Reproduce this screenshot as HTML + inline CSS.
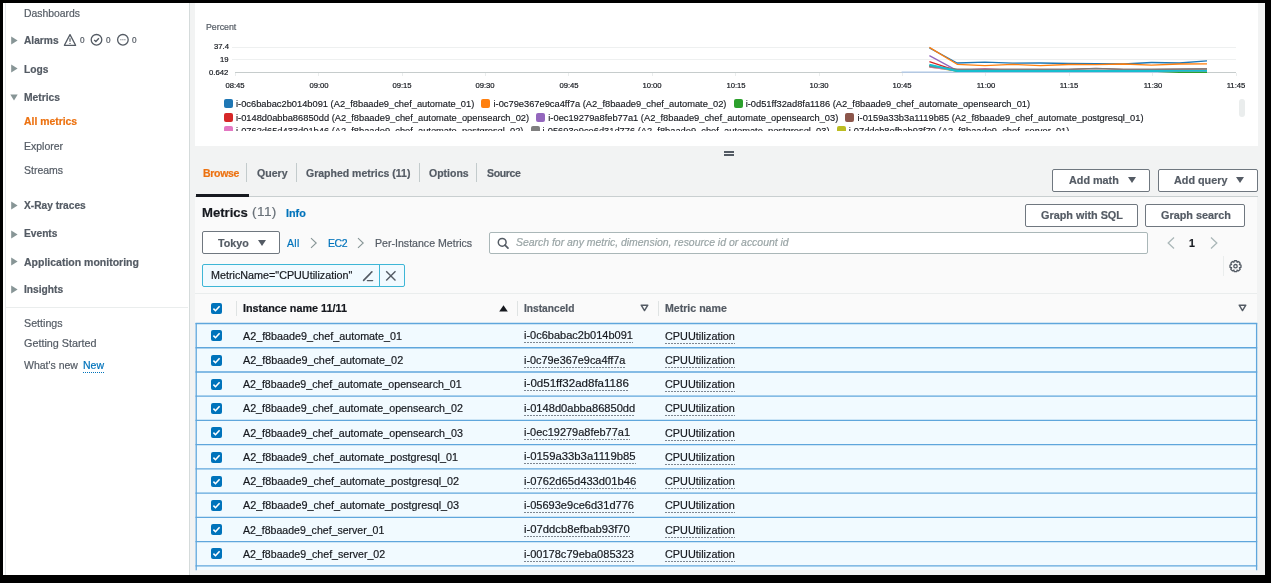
<!DOCTYPE html><html><head><meta charset="utf-8"><style>
html,body{margin:0;padding:0;}
body{width:1271px;height:583px;background:#000;position:relative;overflow:hidden;font-family:"Liberation Sans",sans-serif;}
.t{position:absolute;white-space:nowrap;will-change:transform;-webkit-text-stroke:0.2px currentColor;}
.leg{will-change:transform;-webkit-text-stroke:0.15px currentColor;}
.r{position:absolute;}
.leg{position:absolute;left:0;white-space:nowrap;font-size:9.3px;line-height:13.6px;color:#16191f;}
.li{display:inline-block;margin-right:7.2px;}
.sq{display:inline-block;width:9px;height:9px;border-radius:2px;margin-right:3px;vertical-align:-1px;}
.btn{position:absolute;background:#fff;border:1px solid #6f777f;border-radius:2px;}
.inp{position:absolute;background:#fff;border:1px solid #aab7b8;border-radius:2px;}
.tok{position:absolute;background:#f1faff;border:1px solid #3db6d6;border-radius:2px;}
.dot{background-image:linear-gradient(to right,#7d8690 2px,transparent 2px);background-size:3px 1px;background-repeat:repeat-x;background-position:0 100%;padding-bottom:2px;}
</style></head><body><div class="r" style="left:3.00px;top:3.00px;width:1262.00px;height:572.30px;background:#f2f3f3;"></div>
<div class="r" style="left:3.00px;top:3.00px;width:186.00px;height:572.30px;background:#fff;"></div>
<div class="r" style="left:5.00px;top:3.00px;width:1.00px;height:572.30px;background:#e6e9ec;"></div>
<div class="r" style="left:189.00px;top:3.00px;width:1.00px;height:572.30px;background:#d5dbdb;"></div>
<div class="t" style="left:23.70px;top:9.40px;font-size:10.4px;line-height:10.4px;color:#545b64;">Dashboards</div>
<svg class="r" style="left:11px;top:35.8px" width="7" height="9" viewBox="0 0 7 9"><path d="M0.2 0.4 L6.6 4.5 L0.2 8.6Z" fill="#879596"/></svg>
<div class="t" style="left:24.00px;top:35.57px;font-size:10.2px;line-height:10.2px;color:#545b64;font-weight:700;">Alarms</div>
<svg class="r" style="left:63px;top:33px" width="14" height="14" viewBox="0 0 14 14">
<path d="M7 1.6 L12.6 12.3 L1.4 12.3 Z" fill="none" stroke="#545b64" stroke-width="1.3" stroke-linejoin="round"/>
<path d="M7 5.2 V8.8" stroke="#545b64" stroke-width="1.2"/><path d="M7 10 V11" stroke="#545b64" stroke-width="1.2"/></svg>
<div class="t" style="left:79.80px;top:37.16px;font-size:8.2px;line-height:8.2px;color:#545b64;">0</div>
<svg class="r" style="left:90px;top:33px" width="14" height="14" viewBox="0 0 14 14">
<circle cx="6.5" cy="6.8" r="5.3" fill="none" stroke="#545b64" stroke-width="1.3"/>
<path d="M4.2 6.9 L5.9 8.5 L8.9 5.3" fill="none" stroke="#545b64" stroke-width="1.4"/></svg>
<div class="t" style="left:105.80px;top:37.16px;font-size:8.2px;line-height:8.2px;color:#545b64;">0</div>
<svg class="r" style="left:116px;top:33px" width="14" height="14" viewBox="0 0 14 14">
<circle cx="6.9" cy="6.8" r="5.3" fill="none" stroke="#545b64" stroke-width="1.3"/>
<path d="M4.4 6.8 H5.4 M6.4 6.8 H7.4 M8.4 6.8 H9.4" fill="none" stroke="#545b64" stroke-width="1.1"/></svg>
<div class="t" style="left:132.00px;top:37.16px;font-size:8.2px;line-height:8.2px;color:#545b64;">0</div>
<svg class="r" style="left:11px;top:64.1px" width="7" height="9" viewBox="0 0 7 9"><path d="M0.2 0.4 L6.6 4.5 L0.2 8.6Z" fill="#879596"/></svg>
<div class="t" style="left:24.00px;top:64.87px;font-size:10.2px;line-height:10.2px;color:#545b64;font-weight:700;">Logs</div>
<svg class="r" style="left:10px;top:93.8px" width="8" height="7" viewBox="0 0 8 7"><path d="M0.3 0.5 L7.7 0.5 L4 6.5Z" fill="#879596"/></svg>
<div class="t" style="left:24.00px;top:92.88px;font-size:10.3px;line-height:10.3px;color:#545b64;font-weight:700;">Metrics</div>
<div class="t" style="left:23.70px;top:116.90px;font-size:10.4px;line-height:10.4px;color:#ec7211;font-weight:700;">All metrics</div>
<div class="t" style="left:23.70px;top:140.81px;font-size:10.5px;line-height:10.5px;color:#545b64;">Explorer</div>
<div class="t" style="left:23.70px;top:164.91px;font-size:10.5px;line-height:10.5px;color:#545b64;">Streams</div>
<svg class="r" style="left:11px;top:201.4px" width="7" height="9" viewBox="0 0 7 9"><path d="M0.2 0.4 L6.6 4.5 L0.2 8.6Z" fill="#879596"/></svg>
<div class="t" style="left:24.00px;top:201.17px;font-size:10.2px;line-height:10.2px;color:#545b64;font-weight:700;">X-Ray traces</div>
<svg class="r" style="left:11px;top:229.5px" width="7" height="9" viewBox="0 0 7 9"><path d="M0.2 0.4 L6.6 4.5 L0.2 8.6Z" fill="#879596"/></svg>
<div class="t" style="left:24.00px;top:229.27px;font-size:10.2px;line-height:10.2px;color:#545b64;font-weight:700;">Events</div>
<svg class="r" style="left:11px;top:257.3px" width="7" height="9" viewBox="0 0 7 9"><path d="M0.2 0.4 L6.6 4.5 L0.2 8.6Z" fill="#879596"/></svg>
<div class="t" style="left:24.00px;top:256.71px;font-size:10.5px;line-height:10.5px;color:#545b64;font-weight:700;">Application monitoring</div>
<svg class="r" style="left:11px;top:285.3px" width="7" height="9" viewBox="0 0 7 9"><path d="M0.2 0.4 L6.6 4.5 L0.2 8.6Z" fill="#879596"/></svg>
<div class="t" style="left:24.00px;top:285.37px;font-size:10.2px;line-height:10.2px;color:#545b64;font-weight:700;">Insights</div>
<div class="r" style="left:6.00px;top:306.60px;width:182.00px;height:1.00px;background:#eaeded;"></div>
<div class="t" style="left:23.70px;top:317.74px;font-size:10.7px;line-height:10.7px;color:#545b64;">Settings</div>
<div class="t" style="left:23.70px;top:337.56px;font-size:10.8px;line-height:10.8px;color:#545b64;">Getting Started</div>
<div class="t" style="left:23.70px;top:359.61px;font-size:10.5px;line-height:10.5px;color:#545b64;">What's new</div>
<div class="t" style="left:82.70px;top:359.61px;font-size:10.5px;line-height:10.5px;color:#0073bb;border-bottom:1px dotted #0073bb;padding-bottom:1px;">New</div>
<div class="r" style="left:195.00px;top:3.00px;width:1063.00px;height:143.00px;background:#fff;"></div>
<div class="t" style="left:206.40px;top:23.05px;font-size:8.8px;line-height:8.8px;color:#545b64;">Percent</div>
<div class="t" style="right:1042.30px;top:43.28px;font-size:7.7px;line-height:7.7px;color:#16191f;">37.4</div>
<div class="t" style="right:1042.30px;top:55.88px;font-size:7.7px;line-height:7.7px;color:#16191f;">19</div>
<div class="t" style="right:1042.30px;top:68.68px;font-size:7.7px;line-height:7.7px;color:#16191f;">0.642</div>
<div class="r" style="left:231.50px;top:46.60px;width:1004.00px;height:1.00px;background:#eef0f0;"></div>
<div class="r" style="left:231.50px;top:58.90px;width:1004.00px;height:1.00px;background:#eef0f0;"></div>
<div class="r" style="left:235.00px;top:71.80px;width:1000.50px;height:1.10px;background:#c6cccc;"></div>
<div class="r" style="left:234.70px;top:72.50px;width:1.00px;height:3.00px;background:#eaeded;"></div>
<div class="t" style="left:205.20px;width:60px;text-align:center;top:82.08px;font-size:7.7px;line-height:7.7px;color:#16191f;">08:45</div>
<div class="r" style="left:318.10px;top:72.50px;width:1.00px;height:3.00px;background:#eaeded;"></div>
<div class="t" style="left:288.60px;width:60px;text-align:center;top:82.08px;font-size:7.7px;line-height:7.7px;color:#16191f;">09:00</div>
<div class="r" style="left:401.50px;top:72.50px;width:1.00px;height:3.00px;background:#eaeded;"></div>
<div class="t" style="left:372.00px;width:60px;text-align:center;top:82.08px;font-size:7.7px;line-height:7.7px;color:#16191f;">09:15</div>
<div class="r" style="left:484.90px;top:72.50px;width:1.00px;height:3.00px;background:#eaeded;"></div>
<div class="t" style="left:455.40px;width:60px;text-align:center;top:82.08px;font-size:7.7px;line-height:7.7px;color:#16191f;">09:30</div>
<div class="r" style="left:568.30px;top:72.50px;width:1.00px;height:3.00px;background:#eaeded;"></div>
<div class="t" style="left:538.80px;width:60px;text-align:center;top:82.08px;font-size:7.7px;line-height:7.7px;color:#16191f;">09:45</div>
<div class="r" style="left:651.70px;top:72.50px;width:1.00px;height:3.00px;background:#eaeded;"></div>
<div class="t" style="left:622.20px;width:60px;text-align:center;top:82.08px;font-size:7.7px;line-height:7.7px;color:#16191f;">10:00</div>
<div class="r" style="left:735.10px;top:72.50px;width:1.00px;height:3.00px;background:#eaeded;"></div>
<div class="t" style="left:705.60px;width:60px;text-align:center;top:82.08px;font-size:7.7px;line-height:7.7px;color:#16191f;">10:15</div>
<div class="r" style="left:818.50px;top:72.50px;width:1.00px;height:3.00px;background:#eaeded;"></div>
<div class="t" style="left:789.00px;width:60px;text-align:center;top:82.08px;font-size:7.7px;line-height:7.7px;color:#16191f;">10:30</div>
<div class="r" style="left:901.90px;top:72.50px;width:1.00px;height:3.00px;background:#eaeded;"></div>
<div class="t" style="left:872.40px;width:60px;text-align:center;top:82.08px;font-size:7.7px;line-height:7.7px;color:#16191f;">10:45</div>
<div class="r" style="left:985.30px;top:72.50px;width:1.00px;height:3.00px;background:#eaeded;"></div>
<div class="t" style="left:955.80px;width:60px;text-align:center;top:82.08px;font-size:7.7px;line-height:7.7px;color:#16191f;">11:00</div>
<div class="r" style="left:1068.70px;top:72.50px;width:1.00px;height:3.00px;background:#eaeded;"></div>
<div class="t" style="left:1039.20px;width:60px;text-align:center;top:82.08px;font-size:7.7px;line-height:7.7px;color:#16191f;">11:15</div>
<div class="r" style="left:1152.10px;top:72.50px;width:1.00px;height:3.00px;background:#eaeded;"></div>
<div class="t" style="left:1122.60px;width:60px;text-align:center;top:82.08px;font-size:7.7px;line-height:7.7px;color:#16191f;">11:30</div>
<div class="r" style="left:1235.50px;top:72.50px;width:1.00px;height:3.00px;background:#eaeded;"></div>
<div class="t" style="left:1206.00px;width:60px;text-align:center;top:82.08px;font-size:7.7px;line-height:7.7px;color:#16191f;">11:45</div>
<svg class="r" style="left:0;top:0" width="1271" height="146" viewBox="0 0 1271 146"><path d="M901.6 72.2 H1207.0" stroke="#aec7e8" stroke-width="1.3" fill="none"/><path d="M929.4 55.6 L957.1 70.6 L984.9 70.9 L1012.7 70.9 L1040.4 70.9 L1068.2 70.9 L1096.0 70.9 L1123.7 70.9 L1151.5 70.9 L1179.3 70.9 L1207.0 70.9" stroke="#9467bd" stroke-width="1.3" fill="none" stroke-linejoin="round"/><path d="M929.4 61.7 L957.1 70.8 L984.9 70.9 L1012.7 70.9 L1040.4 70.9 L1068.2 70.9 L1096.0 70.9 L1123.7 70.9 L1151.5 70.9 L1179.3 70.9 L1207.0 70.9" stroke="#d62728" stroke-width="1.3" fill="none" stroke-linejoin="round"/><path d="M929.4 66.8 L957.1 71.2 L984.9 71.2 L1012.7 71.2 L1040.4 71.2 L1068.2 71.2 L1096.0 71.2 L1123.7 71.2 L1151.5 71.2 L1179.3 71.2 L1207.0 71.2" stroke="#bcbd22" stroke-width="1.3" fill="none" stroke-linejoin="round"/><path d="M929.4 65.5 L957.1 71.2 L984.9 71.2 L1012.7 71.2 L1040.4 71.2 L1068.2 71.2 L1096.0 71.2 L1123.7 71.2 L1151.5 71.2 L1179.3 72.3 L1207.0 72.3" stroke="#2ca02c" stroke-width="1.3" fill="none" stroke-linejoin="round"/><path d="M929.4 67.2 L957.1 70.6 L984.9 68.6 L1012.7 70.4 L1040.4 70.9 L1068.2 70.9 L1096.0 70.9 L1123.7 70.9 L1151.5 70.9 L1179.3 70.9 L1207.0 70.9" stroke="#e377c2" stroke-width="1.3" fill="none" stroke-linejoin="round"/><path d="M929.4 66.0 L957.1 69.3 L984.9 69.3 L1012.7 69.3 L1040.4 69.3 L1068.2 69.3 L1096.0 68.4 L1123.7 69.3 L1151.5 69.3 L1179.3 69.1 L1207.0 68.9" stroke="#8c564b" stroke-width="1.3" fill="none" stroke-linejoin="round"/><path d="M929.4 66.5 L957.1 69.4 L984.9 69.4 L1012.7 69.4 L1040.4 69.4 L1068.2 69.4 L1096.0 68.6 L1123.7 69.4 L1151.5 69.4 L1179.3 69.2 L1207.0 69.0" stroke="#7f7f7f" stroke-width="1.3" fill="none" stroke-linejoin="round"/><path d="M929.4 64.7 L957.1 71.0 L984.9 71.0 L1012.7 71.0 L1040.4 71.0 L1068.2 71.0 L1096.0 71.0 L1123.7 71.0 L1151.5 71.0 L1179.3 70.9 L1207.0 70.9" stroke="#17becf" stroke-width="1.9" fill="none" stroke-linejoin="round"/><path d="M929.4 47.9 L957.1 63.0 L984.9 62.2 L1012.7 63.2 L1040.4 63.0 L1068.2 63.5 L1096.0 63.6 L1123.7 64.0 L1151.5 62.5 L1179.3 63.0 L1207.0 60.8" stroke="#1f77b4" stroke-width="1.3" fill="none" stroke-linejoin="round"/><path d="M929.4 47.4 L957.1 64.3 L984.9 65.6 L1012.7 64.3 L1040.4 65.6 L1068.2 64.5 L1096.0 64.6 L1123.7 64.0 L1151.5 65.2 L1179.3 64.0 L1207.0 63.9" stroke="#ff7f0e" stroke-width="1.3" fill="none" stroke-linejoin="round"/></svg>
<div class="r" style="left:224px;top:98px;width:1016px;height:33px;overflow:hidden;"><div class="leg" style="top:0.00px"><span class="li"><span class="sq" style="background:#1f77b4"></span>i-0c6babac2b014b091 (A2_f8baade9_chef_automate_01)</span><span class="li"><span class="sq" style="background:#ff7f0e"></span>i-0c79e367e9ca4ff7a (A2_f8baade9_chef_automate_02)</span><span class="li"><span class="sq" style="background:#2ca02c"></span>i-0d51ff32ad8fa1186 (A2_f8baade9_chef_automate_opensearch_01)</span></div><div class="leg" style="top:13.60px"><span class="li"><span class="sq" style="background:#d62728"></span>i-0148d0abba86850dd (A2_f8baade9_chef_automate_opensearch_02)</span><span class="li"><span class="sq" style="background:#9467bd"></span>i-0ec19279a8feb77a1 (A2_f8baade9_chef_automate_opensearch_03)</span><span class="li"><span class="sq" style="background:#8c564b"></span>i-0159a33b3a1119b85 (A2_f8baade9_chef_automate_postgresql_01)</span></div><div class="leg" style="top:27.20px"><span class="li"><span class="sq" style="background:#e377c2"></span>i-0762d65d433d01b46 (A2_f8baade9_chef_automate_postgresql_02)</span><span class="li"><span class="sq" style="background:#7f7f7f"></span>i-05693e9ce6d31d776 (A2_f8baade9_chef_automate_postgresql_03)</span><span class="li"><span class="sq" style="background:#bcbd22"></span>i-07ddcb8efbab93f70 (A2_f8baade9_chef_server_01)</span></div></div>
<div class="r" style="left:1239.00px;top:98.50px;width:5.50px;height:18.50px;background:#eaeded;border-radius:3px;"></div>
<div class="r" style="left:724.00px;top:151.00px;width:9.50px;height:1.60px;background:#545b64;"></div>
<div class="r" style="left:724.00px;top:154.40px;width:9.50px;height:1.60px;background:#545b64;"></div>
<div class="t" style="left:202.60px;top:167.81px;font-size:10.5px;line-height:10.5px;color:#ec7211;font-weight:700;letter-spacing:-0.3px;">Browse</div>
<div class="r" style="left:246.20px;top:162.70px;width:1.00px;height:19.50px;background:#c3cbcc;"></div>
<div class="t" style="left:256.80px;top:167.73px;font-size:10.6px;line-height:10.6px;color:#545b64;font-weight:700;">Query</div>
<div class="r" style="left:295.50px;top:162.70px;width:1.00px;height:19.50px;background:#c3cbcc;"></div>
<div class="t" style="left:306.30px;top:167.81px;font-size:10.5px;line-height:10.5px;color:#545b64;font-weight:700;">Graphed metrics (11)</div>
<div class="r" style="left:418.60px;top:162.70px;width:1.00px;height:19.50px;background:#c3cbcc;"></div>
<div class="t" style="left:429.30px;top:167.81px;font-size:10.5px;line-height:10.5px;color:#545b64;font-weight:700;">Options</div>
<div class="r" style="left:476.40px;top:162.70px;width:1.00px;height:19.50px;background:#c3cbcc;"></div>
<div class="t" style="left:487.30px;top:167.81px;font-size:10.5px;line-height:10.5px;color:#545b64;font-weight:700;letter-spacing:-0.33px;">Source</div>
<div class="r" style="left:195.00px;top:195.80px;width:1063.00px;height:1.00px;background:#c9cfd0;"></div>
<div class="r" style="left:196.00px;top:194.00px;width:53.00px;height:2.60px;background:#16191f;"></div>
<div class="btn" style="left:1052.40px;top:169.00px;width:95.30px;height:20.50px;"></div>
<div class="t" style="left:1068.50px;top:174.86px;font-size:10.8px;line-height:10.8px;color:#545b64;font-weight:700;">Add math</div>
<svg class="r" style="left:1128px;top:177.30px" width="8" height="6" viewBox="0 0 8 6"><path d="M0 0 H8 L4.0 6Z" fill="#545b64"/></svg>
<div class="btn" style="left:1157.50px;top:169.00px;width:98.60px;height:20.50px;"></div>
<div class="t" style="left:1173.50px;top:174.86px;font-size:10.8px;line-height:10.8px;color:#545b64;font-weight:700;">Add query</div>
<svg class="r" style="left:1236.4px;top:177.30px" width="8" height="6" viewBox="0 0 8 6"><path d="M0 0 H8 L4.0 6Z" fill="#545b64"/></svg>
<div class="r" style="left:195.00px;top:196.60px;width:1062.00px;height:373.70px;background:#fafafa;"></div>
<div class="t" style="left:202.10px;top:205.91px;font-size:13.1px;line-height:13.1px;color:#16191f;font-weight:700;">Metrics</div>
<div class="t" style="left:252.20px;top:205.49px;font-size:13.6px;line-height:13.6px;color:#687078;letter-spacing:0.4px;">(11)</div>
<div class="t" style="left:285.60px;top:207.86px;font-size:10.8px;line-height:10.8px;color:#0073bb;font-weight:700;">Info</div>
<div class="btn" style="left:1024.50px;top:204.00px;width:111.10px;height:20.60px;"></div>
<div class="t" style="left:1040.50px;top:210.12px;font-size:10.85px;line-height:10.85px;color:#545b64;font-weight:700;">Graph with SQL</div>
<div class="btn" style="left:1145.40px;top:204.00px;width:97.50px;height:20.60px;"></div>
<div class="t" style="left:1161.30px;top:210.12px;font-size:10.85px;line-height:10.85px;color:#545b64;font-weight:700;">Graph search</div>
<div class="btn" style="left:202.00px;top:231.20px;width:76.20px;height:20.60px;"></div>
<div class="t" style="left:217.80px;top:237.74px;font-size:10.7px;line-height:10.7px;color:#545b64;font-weight:700;">Tokyo</div>
<svg class="r" style="left:258px;top:240.00px" width="8" height="6" viewBox="0 0 8 6"><path d="M0 0 H8 L4.0 6Z" fill="#545b64"/></svg>
<div class="t" style="left:286.50px;top:237.91px;font-size:10.5px;line-height:10.5px;color:#0073bb;letter-spacing:0.3px;">All</div>
<svg class="r" style="left:309px;top:237px" width="10" height="12" viewBox="0 0 10 12"><path d="M2 1.2 L7.2 6 L2 10.8" fill="none" stroke="#879596" stroke-width="1.1"/></svg>
<div class="t" style="left:327.80px;top:237.91px;font-size:10.5px;line-height:10.5px;color:#0073bb;letter-spacing:-0.45px;">EC2</div>
<svg class="r" style="left:356px;top:237px" width="10" height="12" viewBox="0 0 10 12"><path d="M2 1.2 L7.2 6 L2 10.8" fill="none" stroke="#879596" stroke-width="1.1"/></svg>
<div class="t" style="left:375.40px;top:237.83px;font-size:10.6px;line-height:10.6px;color:#545b64;">Per-Instance Metrics</div>
<div class="inp" style="left:489.4px;top:231.6px;width:656.3px;height:20.4px;"></div>
<svg class="r" style="left:497px;top:237px" width="13" height="13" viewBox="0 0 13 13"><circle cx="5.2" cy="5.3" r="3.9" fill="none" stroke="#545b64" stroke-width="1.5"/><path d="M8 8.1 L11 11.1" stroke="#545b64" stroke-width="1.7" stroke-linecap="round"/></svg>
<div class="t" style="left:515.60px;top:237.95px;font-size:10.45px;line-height:10.45px;color:#9aa5a6;font-style:italic;">Search for any metric, dimension, resource id or account id</div>
<svg class="r" style="left:1166px;top:236px" width="10" height="14" viewBox="0 0 10 14"><path d="M8 1.5 L2.2 7 L8 12.5" fill="none" stroke="#aab7b8" stroke-width="1.3"/></svg>
<div class="t" style="left:1189.20px;top:237.83px;font-size:10.6px;line-height:10.6px;color:#16191f;font-weight:700;">1</div>
<svg class="r" style="left:1208.5px;top:236px" width="10" height="14" viewBox="0 0 10 14"><path d="M2 1.5 L7.8 7 L2 12.5" fill="none" stroke="#aab7b8" stroke-width="1.3"/></svg>
<div class="r" style="left:1223.00px;top:255.70px;width:1.00px;height:20.60px;background:#eaeded;"></div>
<svg class="r" style="left:1228px;top:259px" width="15" height="15" viewBox="0 0 15 15"><path d="M11.43 5.45 L12.99 6.09 L12.99 8.31 L11.43 8.95 L11.52 8.74 L12.17 10.29 L10.59 11.87 L9.04 11.22 L9.25 11.13 L8.61 12.69 L6.39 12.69 L5.75 11.13 L5.96 11.22 L4.41 11.87 L2.83 10.29 L3.48 8.74 L3.57 8.95 L2.01 8.31 L2.01 6.09 L3.57 5.45 L3.48 5.66 L2.83 4.11 L4.41 2.53 L5.96 3.18 L5.75 3.27 L6.39 1.71 L8.61 1.71 L9.25 3.27 L9.04 3.18 L10.59 2.53 L12.17 4.11 L11.52 5.66Z" fill="none" stroke="#545b64" stroke-width="1.35" stroke-linejoin="round"/><circle cx="7.5" cy="7.2" r="1.7" fill="none" stroke="#545b64" stroke-width="1.3"/></svg>
<div class="tok" style="left:202px;top:263.7px;width:200.6px;height:21.1px;"></div>
<div class="t" style="left:210.60px;top:269.87px;font-size:10.78px;line-height:10.78px;color:#16191f;">MetricName="CPUUtilization"</div>
<svg class="r" style="left:360px;top:268px" width="14" height="14" viewBox="0 0 14 14"><path d="M3.6 12.4 L10.2 5.6 M11.0 4.7 L11.9 3.9" fill="none" stroke="#545b64" stroke-width="1.6" stroke-linecap="round"/><path d="M7.4 12.6 H12.6" stroke="#545b64" stroke-width="1.4" stroke-linecap="round"/></svg>
<div class="r" style="left:379.00px;top:264.70px;width:1.00px;height:21.10px;background:#3db6d6;"></div>
<svg class="r" style="left:384px;top:268.5px" width="14" height="14" viewBox="0 0 14 14"><path d="M2.2 2.2 L11.5 11.5 M11.5 2.2 L2.2 11.5" stroke="#545b64" stroke-width="1.4"/></svg>
<div class="r" style="left:195.00px;top:293.00px;width:1062.00px;height:1.00px;background:#eaeded;"></div>
<svg class="r" style="left:210.80px;top:302.60px" width="11" height="11" viewBox="0 0 11 11"><rect x="0" y="0" width="11" height="11" rx="2" fill="#0073bb"/><path d="M2.4 5.6 L4.5 7.7 L8.6 3.2" fill="none" stroke="#fff" stroke-width="1.6"/></svg>
<div class="r" style="left:236.00px;top:300.70px;width:1.00px;height:14.90px;background:#dfe3e3;"></div>
<div class="t" style="left:242.90px;top:302.74px;font-size:10.82px;line-height:10.82px;color:#16191f;font-weight:700;">Instance name 11/11</div>
<svg class="r" style="left:498.5px;top:305px" width="9" height="7" viewBox="0 0 9 7"><path d="M0.2 6.6 H8.8 L4.5 0.2Z" fill="#16191f"/></svg>
<div class="r" style="left:517.00px;top:300.70px;width:1.00px;height:14.90px;background:#dfe3e3;"></div>
<div class="t" style="left:524.40px;top:304.07px;font-size:10.2px;line-height:10.2px;color:#545b64;font-weight:700;">InstanceId</div>
<svg class="r" style="left:639.5px;top:304.3px" width="9" height="8" viewBox="0 0 9 8"><path d="M1.2 1.2 H7.8 L4.5 6.6Z" fill="none" stroke="#545b64" stroke-width="1.45" stroke-linejoin="round"/></svg>
<div class="r" style="left:658.00px;top:300.70px;width:1.00px;height:14.90px;background:#dfe3e3;"></div>
<div class="t" style="left:664.80px;top:302.93px;font-size:10.6px;line-height:10.6px;color:#545b64;font-weight:700;">Metric name</div>
<svg class="r" style="left:1237.8px;top:304.3px" width="9" height="8" viewBox="0 0 9 8"><path d="M1.2 1.2 H7.8 L4.5 6.6Z" fill="none" stroke="#545b64" stroke-width="1.45" stroke-linejoin="round"/></svg>
<div class="r" style="left:195.60px;top:323.00px;width:1061.40px;height:247.30px;background:#f1faff;"></div>
<svg class="r" style="left:210.80px;top:330.30px" width="11" height="11" viewBox="0 0 11 11"><rect x="0" y="0" width="11" height="11" rx="2" fill="#0073bb"/><path d="M2.4 5.6 L4.5 7.7 L8.6 3.2" fill="none" stroke="#fff" stroke-width="1.6"/></svg>
<div class="t" style="left:242.90px;top:330.69px;font-size:10.76px;line-height:10.76px;color:#16191f;">A2_f8baade9_chef_automate_01</div>
<div class="t" style="left:524.40px;top:330.49px;font-size:11.0px;line-height:11.0px;color:#16191f;"><span class="dot">i-0c6babac2b014b091</span></div>
<div class="t" style="left:664.80px;top:330.62px;font-size:10.85px;line-height:10.85px;color:#16191f;"><span class="dot">CPUUtilization</span></div>
<svg class="r" style="left:210.80px;top:354.54px" width="11" height="11" viewBox="0 0 11 11"><rect x="0" y="0" width="11" height="11" rx="2" fill="#0073bb"/><path d="M2.4 5.6 L4.5 7.7 L8.6 3.2" fill="none" stroke="#fff" stroke-width="1.6"/></svg>
<div class="t" style="left:242.90px;top:354.87px;font-size:10.83px;line-height:10.83px;color:#16191f;">A2_f8baade9_chef_automate_02</div>
<div class="t" style="left:524.40px;top:354.82px;font-size:10.89px;line-height:10.89px;color:#16191f;"><span class="dot">i-0c79e367e9ca4ff7a</span></div>
<div class="t" style="left:664.80px;top:354.86px;font-size:10.85px;line-height:10.85px;color:#16191f;"><span class="dot">CPUUtilization</span></div>
<svg class="r" style="left:210.80px;top:378.78px" width="11" height="11" viewBox="0 0 11 11"><rect x="0" y="0" width="11" height="11" rx="2" fill="#0073bb"/><path d="M2.4 5.6 L4.5 7.7 L8.6 3.2" fill="none" stroke="#fff" stroke-width="1.6"/></svg>
<div class="t" style="left:242.90px;top:379.27px;font-size:10.64px;line-height:10.64px;color:#16191f;">A2_f8baade9_chef_automate_opensearch_01</div>
<div class="t" style="left:524.40px;top:378.49px;font-size:11.56px;line-height:11.56px;color:#16191f;"><span class="dot">i-0d51ff32ad8fa1186</span></div>
<div class="t" style="left:664.80px;top:379.10px;font-size:10.85px;line-height:10.85px;color:#16191f;"><span class="dot">CPUUtilization</span></div>
<svg class="r" style="left:210.80px;top:403.02px" width="11" height="11" viewBox="0 0 11 11"><rect x="0" y="0" width="11" height="11" rx="2" fill="#0073bb"/><path d="M2.4 5.6 L4.5 7.7 L8.6 3.2" fill="none" stroke="#fff" stroke-width="1.6"/></svg>
<div class="t" style="left:242.90px;top:403.47px;font-size:10.69px;line-height:10.69px;color:#16191f;">A2_f8baade9_chef_automate_opensearch_02</div>
<div class="t" style="left:524.40px;top:403.12px;font-size:11.11px;line-height:11.11px;color:#16191f;"><span class="dot">i-0148d0abba86850dd</span></div>
<div class="t" style="left:664.80px;top:403.34px;font-size:10.85px;line-height:10.85px;color:#16191f;"><span class="dot">CPUUtilization</span></div>
<svg class="r" style="left:210.80px;top:427.26px" width="11" height="11" viewBox="0 0 11 11"><rect x="0" y="0" width="11" height="11" rx="2" fill="#0073bb"/><path d="M2.4 5.6 L4.5 7.7 L8.6 3.2" fill="none" stroke="#fff" stroke-width="1.6"/></svg>
<div class="t" style="left:242.90px;top:427.71px;font-size:10.69px;line-height:10.69px;color:#16191f;">A2_f8baade9_chef_automate_opensearch_03</div>
<div class="t" style="left:524.40px;top:427.48px;font-size:10.96px;line-height:10.96px;color:#16191f;"><span class="dot">i-0ec19279a8feb77a1</span></div>
<div class="t" style="left:664.80px;top:427.58px;font-size:10.85px;line-height:10.85px;color:#16191f;"><span class="dot">CPUUtilization</span></div>
<svg class="r" style="left:210.80px;top:451.50px" width="11" height="11" viewBox="0 0 11 11"><rect x="0" y="0" width="11" height="11" rx="2" fill="#0073bb"/><path d="M2.4 5.6 L4.5 7.7 L8.6 3.2" fill="none" stroke="#fff" stroke-width="1.6"/></svg>
<div class="t" style="left:242.90px;top:451.87px;font-size:10.78px;line-height:10.78px;color:#16191f;">A2_f8baade9_chef_automate_postgresql_01</div>
<div class="t" style="left:524.40px;top:451.42px;font-size:11.32px;line-height:11.32px;color:#16191f;"><span class="dot">i-0159a33b3a1119b85</span></div>
<div class="t" style="left:664.80px;top:451.82px;font-size:10.85px;line-height:10.85px;color:#16191f;"><span class="dot">CPUUtilization</span></div>
<svg class="r" style="left:210.80px;top:475.74px" width="11" height="11" viewBox="0 0 11 11"><rect x="0" y="0" width="11" height="11" rx="2" fill="#0073bb"/><path d="M2.4 5.6 L4.5 7.7 L8.6 3.2" fill="none" stroke="#fff" stroke-width="1.6"/></svg>
<div class="t" style="left:242.90px;top:476.06px;font-size:10.84px;line-height:10.84px;color:#16191f;">A2_f8baade9_chef_automate_postgresql_02</div>
<div class="t" style="left:524.40px;top:475.74px;font-size:11.22px;line-height:11.22px;color:#16191f;"><span class="dot">i-0762d65d433d01b46</span></div>
<div class="t" style="left:664.80px;top:476.06px;font-size:10.85px;line-height:10.85px;color:#16191f;"><span class="dot">CPUUtilization</span></div>
<svg class="r" style="left:210.80px;top:499.98px" width="11" height="11" viewBox="0 0 11 11"><rect x="0" y="0" width="11" height="11" rx="2" fill="#0073bb"/><path d="M2.4 5.6 L4.5 7.7 L8.6 3.2" fill="none" stroke="#fff" stroke-width="1.6"/></svg>
<div class="t" style="left:242.90px;top:500.30px;font-size:10.84px;line-height:10.84px;color:#16191f;">A2_f8baade9_chef_automate_postgresql_03</div>
<div class="t" style="left:524.40px;top:500.13px;font-size:11.05px;line-height:11.05px;color:#16191f;"><span class="dot">i-05693e9ce6d31d776</span></div>
<div class="t" style="left:664.80px;top:500.30px;font-size:10.85px;line-height:10.85px;color:#16191f;"><span class="dot">CPUUtilization</span></div>
<svg class="r" style="left:210.80px;top:524.22px" width="11" height="11" viewBox="0 0 11 11"><rect x="0" y="0" width="11" height="11" rx="2" fill="#0073bb"/><path d="M2.4 5.6 L4.5 7.7 L8.6 3.2" fill="none" stroke="#fff" stroke-width="1.6"/></svg>
<div class="t" style="left:242.90px;top:524.78px;font-size:10.56px;line-height:10.56px;color:#16191f;">A2_f8baade9_chef_server_01</div>
<div class="t" style="left:524.40px;top:524.17px;font-size:11.28px;line-height:11.28px;color:#16191f;"><span class="dot">i-07ddcb8efbab93f70</span></div>
<div class="t" style="left:664.80px;top:524.54px;font-size:10.85px;line-height:10.85px;color:#16191f;"><span class="dot">CPUUtilization</span></div>
<svg class="r" style="left:210.80px;top:548.46px" width="11" height="11" viewBox="0 0 11 11"><rect x="0" y="0" width="11" height="11" rx="2" fill="#0073bb"/><path d="M2.4 5.6 L4.5 7.7 L8.6 3.2" fill="none" stroke="#fff" stroke-width="1.6"/></svg>
<div class="t" style="left:242.90px;top:548.98px;font-size:10.61px;line-height:10.61px;color:#16191f;">A2_f8baade9_chef_server_02</div>
<div class="t" style="left:524.40px;top:548.61px;font-size:11.05px;line-height:11.05px;color:#16191f;"><span class="dot">i-00178c79eba085323</span></div>
<div class="t" style="left:664.80px;top:548.78px;font-size:10.85px;line-height:10.85px;color:#16191f;"><span class="dot">CPUUtilization</span></div>
<svg class="r" style="left:0;top:0" width="1271" height="583" viewBox="0 0 1271 583"><path d="M195.5 323.50 H1257.2" stroke="#5fa6dc" stroke-width="1.3"/><path d="M195.5 347.74 H1257.2" stroke="#5fa6dc" stroke-width="1.3"/><path d="M195.5 371.98 H1257.2" stroke="#5fa6dc" stroke-width="1.3"/><path d="M195.5 396.22 H1257.2" stroke="#5fa6dc" stroke-width="1.3"/><path d="M195.5 420.46 H1257.2" stroke="#5fa6dc" stroke-width="1.3"/><path d="M195.5 444.70 H1257.2" stroke="#5fa6dc" stroke-width="1.3"/><path d="M195.5 468.94 H1257.2" stroke="#5fa6dc" stroke-width="1.3"/><path d="M195.5 493.18 H1257.2" stroke="#5fa6dc" stroke-width="1.3"/><path d="M195.5 517.42 H1257.2" stroke="#5fa6dc" stroke-width="1.3"/><path d="M195.5 541.66 H1257.2" stroke="#5fa6dc" stroke-width="1.3"/><path d="M195.5 565.90 H1257.2" stroke="#5fa6dc" stroke-width="1.3"/><path d="M196.2 322.9 V570.3 M1256.6 322.9 V570.3" stroke="#5fa6dc" stroke-width="1.3"/></svg></body></html>
